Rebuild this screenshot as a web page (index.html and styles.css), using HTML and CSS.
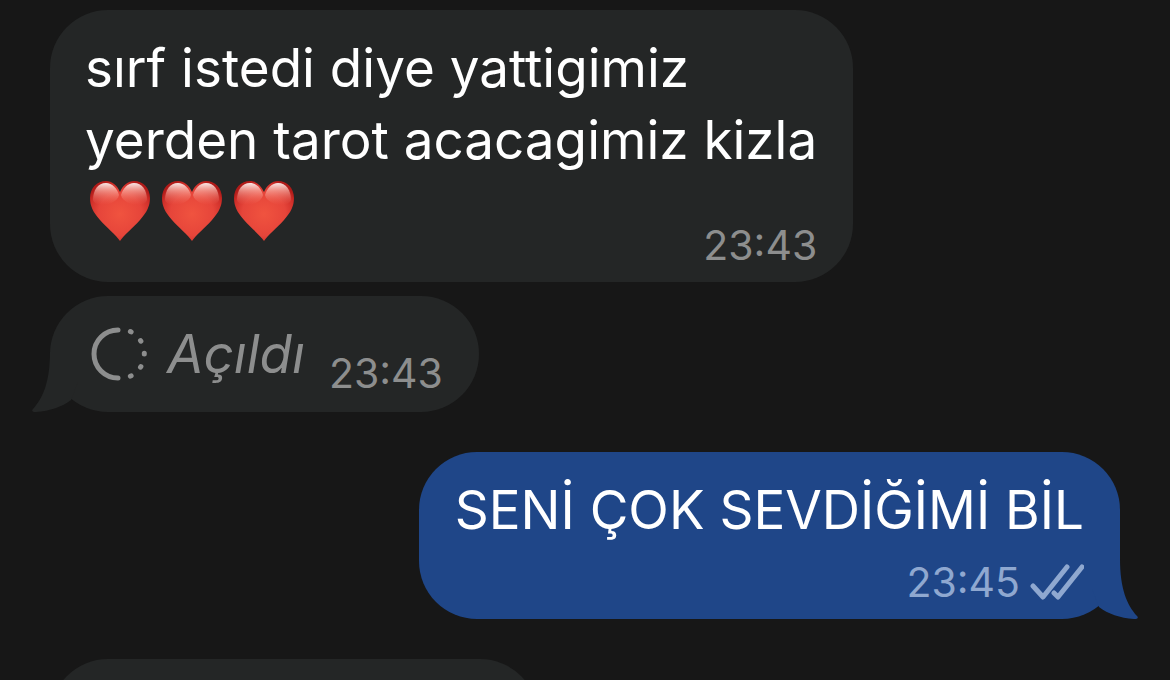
FILE: index.html
```html
<!DOCTYPE html>
<html lang="tr">
<head>
<meta charset="utf-8">
<meta name="viewport" content="width=device-width, initial-scale=1">
<title>Chat</title>
<link rel="stylesheet" href="styles.css">
</head>
<body>

<svg width="0" height="0" class="defs" aria-hidden="true">
  <defs>
    <radialGradient id="red" cx="50%" cy="55%" r="60%">
      <stop offset="0" stop-color="#f0533f"/>
      <stop offset="0.6" stop-color="#e6453a"/>
      <stop offset="0.85" stop-color="#d0302a"/>
      <stop offset="1" stop-color="#b01a18"/>
    </radialGradient>
    <linearGradient id="shine" x1="0" y1="0" x2="0" y2="1">
      <stop offset="0" stop-color="#fff" stop-opacity="0.9"/>
      <stop offset="0.35" stop-color="#ffc4b8" stop-opacity="0.6"/>
      <stop offset="1" stop-color="#f0705f" stop-opacity="0"/>
    </linearGradient>
    <symbol id="heart" viewBox="0 0 62 62">
      <path fill="url(#red)" d="M31 61C27 55 18 48 11 40C4 32 1 26 1 18C1 8 8 1 17 1C23 1 28 5 31 12C34 5 39 1 45 1C54 1 61 8 61 18C61 26 58 32 51 40C44 48 35 55 31 61Z"/>
      <path fill="url(#shine)" d="M4 20C4 10 9 3 17 3C23 3 28 8 30 15C28 25 7 29 4 20Z"/>
      <path fill="url(#shine)" d="M58 20C58 10 53 3 45 3C39 3 34 8 32 15C34 25 55 29 58 20Z"/>
    </symbol>
  </defs>
</svg>

<main class="chat">
  <div class="msg in">
    <p>sırf istedi diye yattigimiz<br>yerden tarot acacagimiz kizla</p>
    <div class="last-line">
      <div class="hearts" role="img" aria-label="hearts">
        <svg><use href="#heart"/></svg>
        <svg><use href="#heart"/></svg>
        <svg><use href="#heart"/></svg>
      </div>
      <time>23:43</time>
    </div>
  </div>

  <div class="msg in opened">
    <svg class="tail" viewBox="0 0 46 60"><path d="M18 0C18 30 11 46 1 57C-1 59 1 60 4 60C18 59 30 55 39 48L46 30V0Z"/></svg>
    <svg class="once" viewBox="0 0 56 56"><path d="M27 4A24 24 0 0 0 27 52"/><path d="M39.4 5.5l.7.4M49.5 14.6l.4.6M53.3 27.3v.8M49.9 40.6l-.4.6M40.1 49.8l-.7.4"/></svg>
    <em>Açıldı</em>
    <time>23:43</time>
  </div>

  <div class="msg out">
    <p>SENİ ÇOK SEVDİĞİMİ BİL</p>
    <div class="meta">
      <time>23:45</time>
      <svg class="ticks" viewBox="0 0 54 36"><path d="M3 22L13 33L37 3M24 29L28 33L52 3"/></svg>
    </div>
    <svg class="tail" viewBox="0 0 46 60"><path d="M28 0C28 30 35 46 45 57C47 59 45 60 42 60C28 59 16 55 7 48L0 30V0Z"/></svg>
  </div>

  <div class="msg in next"></div>
</main>

</body>
</html>
```

FILE: styles.css
```css
body {
  margin: 0;
  background: #171717;
  color: #fff;
  font-family: Inter, "Liberation Sans", sans-serif;
}

.defs {
  position: absolute;
}

.chat {
  display: flex;
  flex-direction: column;
  align-items: flex-start;
  box-sizing: border-box;
  height: 100vh;
  padding: 10px 50px 0;
  overflow: hidden;
}

.msg {
  position: relative;
  flex-shrink: 0;
  box-sizing: border-box;
  padding: 22px 36px 13px;
  border-radius: 58px;
}

.in {
  padding-left: 35px;
  background: #242626;
}

.out {
  align-self: flex-end;
  margin-top: 40px;
  background: #1f4688;
}

p {
  margin: 0;
  font-size: 53px;
  line-height: 72px;
  white-space: nowrap;
}

time {
  color: #8d8e8e;
  font-size: 41px;
  line-height: 48px;
}

.last-line {
  display: flex;
  justify-content: space-between;
  align-items: flex-end;
}

.hearts {
  display: flex;
  gap: 10px;
  padding: 4px 4px 27px;
}

.hearts svg {
  width: 62px;
  height: 62px;
}

.opened {
  display: flex;
  align-items: center;
  min-height: 116px;
  margin-top: 14px;
  padding-top: 0;
  padding-bottom: 0;
}

.once {
  width: 56px;
  height: 56px;
  margin: 0 20px 0 6px;
  fill: none;
  stroke: #8d8e8e;
  stroke-width: 5;
  stroke-linecap: round;
}

em {
  color: #8d8e8e;
  font-size: 53px;
}

.opened time {
  margin: 38px 0 0 24px;
}

.tail {
  position: absolute;
  bottom: 0;
  width: 46px;
  height: 60px;
}

.in .tail {
  left: -18px;
  fill: #242626;
}

.out .tail {
  right: -18px;
  fill: #1f4688;
}

.meta {
  display: flex;
  justify-content: flex-end;
  align-items: center;
  gap: 10px;
  margin-top: 12px;
}

.meta time {
  color: #8fa8d0;
}

.ticks {
  width: 54px;
  height: 36px;
  fill: none;
  stroke: #8fa8d0;
  stroke-width: 5;
  stroke-linecap: round;
  stroke-linejoin: round;
}

.next {
  width: 488px;
  height: 116px;
  margin-top: 40px;
}
```
